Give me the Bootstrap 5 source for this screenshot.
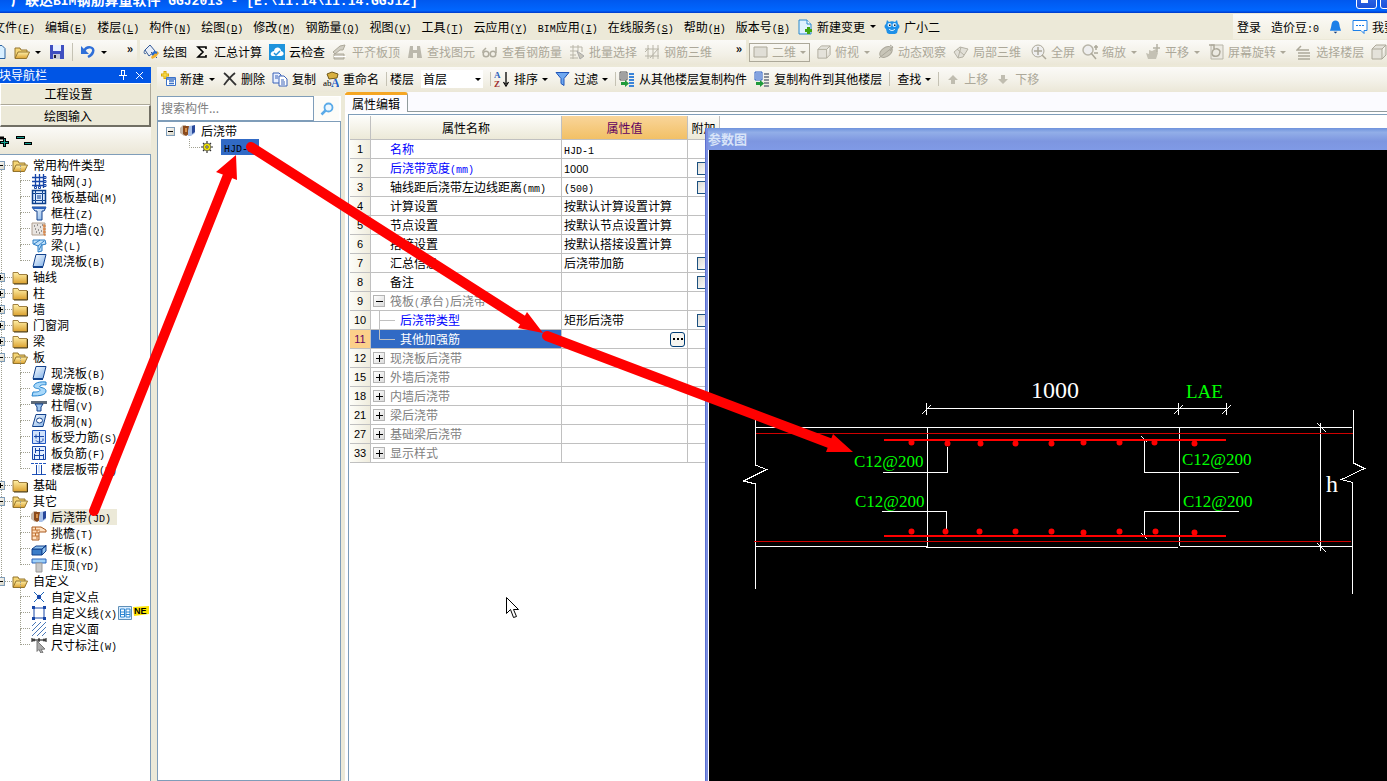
<!DOCTYPE html>
<html lang="zh-CN">
<head>
<meta charset="utf-8">
<meta name="viewport" content="width=device-width, initial-scale=1">
<title>广联达BIM钢筋算量软件 GGJ2013</title>
<link href="https://cdn.jsdelivr.net/npm/bootstrap@5.3.0/dist/css/bootstrap.min.css" rel="stylesheet">
<script src="https://cdn.jsdelivr.net/npm/bootstrap@5.3.0/dist/js/bootstrap.bundle.min.js"></script>
<style>
body{font-family:"Noto Sans CJK SC",sans-serif;font-size:12px;line-height:16px;color:#000;background:#ece9d8}
button{border:0;background:none;padding:0;color:inherit;line-height:16px;white-space:nowrap}
svg{flex:none;display:block}
.en{font-family:"Liberation Mono",monospace;font-size:10px;line-height:1}
.titlebar{height:13px;background:linear-gradient(#0058ee,#0066ff 80%,#0038c8);color:#fff;font-weight:700;font-size:14px;padding:0 0 5px 11px}
.titlebar .en{font-size:13px;white-space:pre}
.winbtns{gap:3px;margin:-12px -14px 0 auto}
.winbtn{width:21px;height:21px;border:1px solid #fff;border-radius:3px;background:linear-gradient(#3c78f0,#1a50d8)}
.menubar{height:27px;gap:10px;margin-left:-7px}
.menubar>div{gap:10px}
.menubar>.withicon{margin-left:-3px}
.account{background:linear-gradient(#fbfaf6,#f1eee0);height:25px;margin-right:-9px;padding-left:4px}
.bar{background:linear-gradient(#fbfaf7,#f3f1e8 55%,#ebe7d7);gap:7px;height:25px;padding-bottom:1px}
.bar button,.menubar .withicon{display:flex;align-items:center;gap:4px}
.bar .dim{color:#aca899}
.bar-std{width:137px}
.bar-calc{width:606px;padding-left:3px}
.bar-edit{padding-left:3px}
.caret{width:0;border:3px solid transparent;border-top-color:currentColor;border-bottom:0;margin:0 1px}
.caret.tight{margin:0}
.vsep{width:1px;height:14px;background:#c5c2b4}
.vsep.near{margin-right:-4px}
.strip{gap:3px}
.viewsel{border:1px solid #aca899;height:19px;width:62px;padding:0 3px}
.picker{appearance:none;border:0;border-radius:0;background:#fff;width:62px;height:18px;padding:0 2px;font-size:12px;line-height:16px;color:#000}
.pickwrap .caret{position:absolute;right:1px;top:8px}
.nav-pane{width:151px}
.nav-title{height:16px;background:#0055e5;color:#fff;margin-left:-1px}
.nav-tools{height:27px;background:linear-gradient(#fbfaf7,#ebe7d7)}
.navbtn{height:22px;border:1px solid #fff;border-color:#fff #aca899 #aca899 #fff;background:#ece9d8;width:100%;padding-right:14px}
.navbtn.on{border-right:2px solid #716f64;border-bottom:2px solid #716f64}
.tree{background:#fff;border-top:1px solid #7f9db9;border-right:1px solid #7f9db9;padding-top:2px}
.tree ul{list-style:none;margin:0;padding:0}
.tree li>div{display:flex;align-items:center;height:16px;white-space:nowrap}
.root{position:relative}
.root>li>div{padding-left:12px;gap:5px}
.root>li{position:relative}
.box{width:9px;height:9px;border:1px solid #7f9db9;background:linear-gradient(135deg,#fff,#d8d4c4);position:relative;flex:none}
.box::before,.box.plus::after{content:"";position:absolute;background:#000;left:1px;top:3px;width:5px;height:1px}
.box.plus::after{left:3px;top:1px;width:1px;height:5px}
.root>li>.box{position:absolute;left:-4px;top:4px;z-index:1}
.root>li::before{content:"";position:absolute;left:1px;top:8px;bottom:-8px;width:11px;border-left:1px dotted #a0a090;border-top:1px dotted #a0a090}
.root>li:last-child::before{bottom:auto}
.kids>li{position:relative}
.kids>li>div{padding-left:31px;gap:4px}
.kids>li::before{content:"";position:absolute;left:20px;top:-8px;width:10px;height:16px;border:dotted #a0a090;border-width:0 0 1px 1px}
.pick{background:#ece9d8;padding:0 6px 0 1px;margin-left:-1px}
.list-pane{width:184px;padding-top:4px}
.search{border:1px solid #7f9db9;border-radius:0;font-size:12px;height:25px;width:157px;padding:0 3px 2px;line-height:16px}
.search::placeholder{color:#808080;opacity:1}
.findbtn{width:25px;height:23px;display:flex;align-items:center;justify-content:center;background:#fdfcf8!important}
.frame{border:1px solid #7f9db9;background:#fff;padding-top:1px}
.frame>div{height:16px}
.parts{gap:5px}
.hl{background:#316ac5;padding:0 5px 0 3px}
.tabs{height:20px;background:#fbfbff}
.tabs::after{content:"";flex:1;border-bottom:1px solid #919b9c}
.tabs button{width:63px;border-top:3px solid #f5a623;border-right:1px solid #919b9c;border-radius:3px 3px 0 0;background:#fdfcff}
.grid-box{border:solid #7f9db9;border-width:1px 0 0 1px;background:#fff;margin:2px 0 0 3px}
.props{width:370px;table-layout:fixed;border-collapse:separate;border-spacing:0;margin:1px 0 0 1px}
.props th,.props td{border:solid #c0c0c0;border-width:0 1px 1px 0;height:19px;padding:0 2px;font-weight:400;line-height:16px;white-space:nowrap;overflow:hidden}
.props thead th{height:24px;text-align:center;background:linear-gradient(#fdfdfa,#ece9d8)}
.props thead .val{background:linear-gradient(#f9d59a,#f2c065);color:#600060}
.props tbody th{text-align:center;background:linear-gradient(90deg,#fdfdf8,#efecdd);font-family:"Liberation Sans",sans-serif;font-size:11px}
.props tbody th.now{background:#fcd08a;color:#600060}
.props td:nth-child(2){padding-left:19px}
.props td .num{font-family:"Liberation Sans",sans-serif;font-size:11px;line-height:1}
.props .grp{color:#808080}
.props td.grp:nth-child(2),.props td.sub:nth-child(2){padding-left:2px}
.props .wrap{display:flex;align-items:center;gap:5px;height:18px}
.fold{width:12px;height:12px;border:1px solid #b4b4b4;background:linear-gradient(135deg,#fff,#dcdcdc);position:relative}
.fold::before,.fold.plus::after{content:"";position:absolute;background:#000;left:2px;top:5px;width:7px;height:1px}
.fold.plus::after{left:5px;top:2px;width:1px;height:7px}
.blue{color:#00f}
.props .sel{background:#316ac5;color:#fff}
.props input{appearance:none;width:13px;height:13px;border:1px solid #1c5180;background:linear-gradient(135deg,#dcdcd7,#fff);display:block;margin:0 auto}
.more{width:15px;height:15px;border:1px solid #003c74!important;border-radius:3px;background:#f6f5f0!important;display:flex;align-items:center;justify-content:center;gap:2px;margin-left:auto}
.more i{width:2px;height:2px;background:#000}
.paramwin{position:absolute;left:705px;top:128px;right:0;bottom:0;background:#7b8ee0;border-left:1px solid #5a6fd0;padding-left:2px;z-index:3}
.paramhead{height:22px;background:linear-gradient(#6f93dc,#92aee8 20%,#7d96e0 60%,#809ae6);color:#d8e4f8;font-weight:700;font-size:13px;line-height:22px}
.canvas{background:#000;border-left:1px solid #fff;overflow:hidden}
.canvas text{font-family:"Liberation Serif",serif}
.marks{position:absolute;left:0;top:0;z-index:4;pointer-events:none}
</style>
</head>
<body class="vh-100 d-flex flex-column overflow-hidden position-relative">

<svg width="0" height="0" class="position-absolute" aria-hidden="true">
<defs>
<linearGradient id="gy" x2="0" y2="1"><stop stop-color="#fff0a8"/><stop offset="1" stop-color="#dca230"/></linearGradient>
<linearGradient id="gb" x2="1" y2="1"><stop stop-color="#fff"/><stop offset="1" stop-color="#7fb0e8"/></linearGradient>
<symbol id="folder" viewBox="0 0 16 16"><path d="M1 3.500h5l1 2h8v9H1z" fill="url(#gy)" stroke="#a08040"/><path d="M15.500 6v9H2" fill="none" stroke="#4a3a10"/></symbol>
<symbol id="open" viewBox="0 0 16 16"><path d="M1 14V4h5l1 2h6v3" fill="#f5d676" stroke="#94742c"/><path d="M1 14.500 4 8h11.500l-3 6.500z" fill="url(#gy)" stroke="#94742c"/></symbol>
<symbol id="axis" viewBox="0 0 16 16"><path d="M4.500 1v14M8.500 1v14M12.500 1v14M1 4.500h12M1 8.500h12M1 12.500h12" stroke="#1746a8" stroke-width="1.300"/><path d="M13 3.500h2v2h-2zM13 7.500h2v2h-2zM13 11.500h2v2h-2zM3.500 13.500h2v2h-2zM7.500 13.500h2v2h-2z" fill="#fff" stroke="#1746a8"/></symbol>
<symbol id="raft" viewBox="0 0 16 16"><path d="M1.500 1.500h13v13h-13z" fill="#dcebff" stroke="#0e418d" stroke-width="1.500"/><path d="M4.500 4.500h7v7h-7zM7 6v4M9 6v4M1 4.500h3M12 4.500h3M1 11.500h3M12 11.500h3M4.500 1v3M11.500 1v3M4.500 12v3M11.500 12v3" fill="none" stroke="#0e418d"/></symbol>
<symbol id="col" viewBox="0 0 16 16"><path d="M1 2h14l-2 4h-2v9H6V6H4z" fill="url(#gb)" stroke="#12418c"/><path d="M1 2h14v2H2z" fill="#2b62bb"/></symbol>
<symbol id="wall" viewBox="0 0 16 16"><path d="M1 2h13v12H1z" fill="#e8e4e0" stroke="#b0a090"/><path d="M3 5h1M6 4h1M9 6h1M4 8h1M7 9h1M5 11h1M10 10h1M8 12h1M11 4h1" stroke="#444"/><path d="M13 3v11M12 5h3M12 8h3M12 11h3M13 14h2" stroke="#d87830"/></symbol>
<symbol id="beam" viewBox="0 0 16 16"><path d="M2 3h12l1 4-4 1v6l-4 1V9L2 7z" fill="#bfe0fa" stroke="#2b7cc4"/><path d="m3 7 6-4M7 9l6-5M8 13l3-6" stroke="#2b7cc4"/></symbol>
<symbol id="slab" viewBox="0 0 16 16"><path d="M5 1.500h10l-3 12H2z" fill="url(#gb)" stroke="#12418c"/><path d="M2 14h10" stroke="#12418c" stroke-width="2"/></symbol>
<symbol id="spiral" viewBox="0 0 16 16"><path d="M15 1C5 0 2 4 3 6s6 1 6 3-4 2-7 2l-1 4c8 0 14-1 14-5S7 7 9 5s6-1 6-1z" fill="#a8d8fa" stroke="#2584cf"/></symbol>
<symbol id="cap" viewBox="0 0 16 16"><path d="M0 4h16v3H0z" fill="#5d6a78"/><path d="M4 7h8l-2 3v4H6v-4z" fill="#9ec6ee" stroke="#12418c"/></symbol>
<symbol id="hole" viewBox="0 0 16 16"><path d="M5 1.500h10l-3 12H1.500z" fill="url(#gb)" stroke="#12418c"/><ellipse cx="8.500" cy="7.500" rx="3" ry="2.500" fill="#fff" stroke="#12418c"/></symbol>
<symbol id="rebar" viewBox="0 0 16 16"><path d="M1.500 1.500h13v13h-13z" fill="#cfe1fb" stroke="#1f55c0"/><path d="M8.500 3v11M3 7.500h10M5 5.500v4M5 11.500c1 2 6 2 7 0v-2" fill="none" stroke="#1746a8"/></symbol>
<symbol id="neg" viewBox="0 0 16 16"><path d="M1.500 1.500h13v13h-13z" fill="#e4efff" stroke="#1746a8"/><path d="M4 5.500h9M3 10.500h10M8.500 3v11M4.500 3v5M3.500 9v5M12.500 9v5" stroke="#1746a8"/></symbol>
<symbol id="band" viewBox="0 0 16 16"><path d="M0 2.500h16" stroke="#1f55c0" stroke-dasharray="3 1"/><path d="M1 13.500h14" stroke="#1f55c0"/><path d="M5.500 4v10M10.500 4v10" stroke="#1746a8"/><path d="M7 4h2v8H7z" fill="#cfe1fb"/></symbol>
<symbol id="pour" viewBox="0 0 16 16"><path d="M0 5l3-3h3v10l-2 1-4-3z" fill="#c8b8a8"/><path d="M3 3h6v8l-3 2-3-2z" fill="#8a4a1c"/><path d="M5 5h2v4H5z" fill="#d89048"/><path d="M9 3l6-1v8l-4 3H8V8z" fill="#a8c0e8"/><path d="M12 3l3-1v7l-3 2z" fill="#28479a"/></symbol>
<symbol id="eave" viewBox="0 0 16 16"><path d="M1 2h9l5 3v2H8v8H1z" fill="#ffe0c0" stroke="#a85a20"/><path d="M1 5h8M1 8h7M1 11h7M4.500 2v3M4.500 8v3M6 5v3M6 11v3" stroke="#c07030"/></symbol>
<symbol id="rail" viewBox="0 0 16 16"><path d="M1 8h10v6H1z" fill="#3a7cc8" stroke="#12418c"/><path d="m1 8 4-3h10l-4 3zM11 8l4-4v6l-4 4z" fill="#8fc2f0" stroke="#12418c"/></symbol>
<symbol id="coping" viewBox="0 0 16 16"><path d="M1 2h14v4H1z" fill="#9ed0f8" stroke="#2b62bb"/><path d="M5 6h6v9H5z" fill="#c8c8c8" stroke="#999"/></symbol>
<symbol id="pt" viewBox="0 0 16 16"><path d="M3 3l10 10M13 3 3 13" fill="none" stroke="#1a62b8"/><circle cx="8" cy="8" r="2.200" fill="#1746a8"/></symbol>
<symbol id="ln" viewBox="0 0 16 16"><path d="M3 3h10v10H3z" fill="#fff" stroke="#1746a8"/><path d="M1 1h3v3H1zM12 1h3v3h-3zM1 12h3v3H1zM12 12h3v3h-3z" fill="#1746a8"/></symbol>
<symbol id="hatch" viewBox="0 0 16 16"><path d="m1 5 4-4M1 10l9-9M1 15 15 1M6 15l9-9M11 15l4-4" stroke="#4a78b8"/></symbol>
<symbol id="dimn" viewBox="0 0 16 16"><path d="M1 1v4M15 1v4M8 1v4M1 3h14M3 1.500v3M13 1.500v3" stroke="#000"/><path d="m6 4 8 8-4 .4 2 3-2 1-2-4-2 2z" fill="#aaa" stroke="#777"/></symbol>
<symbol id="gear" viewBox="0 0 12 12"><path d="M6 0v12M0 6h12M2 2l8 8M10 2l-8 8" stroke="#333" stroke-width="1.200"/><circle cx="6" cy="6" r="3.800" fill="#f4e600" stroke="#555" stroke-width=".8"/><circle cx="6" cy="6" r="1.200" fill="#fff" stroke="#222" stroke-width=".8"/></symbol>
<symbol id="page" viewBox="0 0 16 16"><path d="M2 1h8l4 4v10H2z" fill="#e0f2ff" stroke="#2888cc"/><path d="M10 1v4h4" fill="#fff" stroke="#2888cc"/></symbol>
<symbol id="bldg" viewBox="0 0 16 16"><path d="M1 1h7v8H1z" fill="#eee" stroke="#555"/><path d="M2 3h5M2 5h5M2 7h5" stroke="#555"/><path d="M10 3h5M10 6h5M10 9h5M10 12h5M10 15h5" stroke="#3b84d8" stroke-width="1.800"/><path d="M2 11h4V9l4 3.500L6 16v-2H2z" fill="#1f9a3a"/></symbol>
<symbol id="bldg2" viewBox="0 0 16 16"><path d="M1 1h7v8H1z" fill="#dbe8ff" stroke="#2b5cc0"/><path d="M2 3h5M2 5h5M2 7h5" stroke="#2b5cc0"/><path d="M10 3h5M10 6h5M10 9h5M10 12h5M10 15h5" stroke="#8a8f98" stroke-width="1.800"/><path d="M2 11h4V9l4 3.500L6 16v-2H2z" fill="#1f9a3a"/></symbol>
<symbol id="cube" viewBox="0 0 16 16"><path d="M1 5h10v10H1zM1 5l4-4h10l-4 4M15 1v10l-4 4" fill="#e4e2da" stroke="#aca899"/></symbol>
</defs>
</svg>

<header class="titlebar d-flex align-items-end overflow-hidden text-nowrap">
  <div>广联达<span class="en">BIM</span>钢筋算量软件<span class="en"> GGJ2013 - [E:\11.14\11.14.GGJ12]</span></div>
  <div class="winbtns d-flex align-self-start">
    <button class="winbtn d-flex align-items-end justify-content-center" aria-label="最小化"><svg width="20" height="8"><path d="M4 0h7v3H4z" fill="#fff"/></svg></button>
    <button class="winbtn" aria-label="最大化"></button>
  </div>
</header>

<nav class="menubar d-flex align-items-center text-nowrap">
  <div class="d-flex">
  <button>文件<span class="en">(<u>F</u>)</span></button><button>编辑<span class="en">(<u>E</u>)</span></button><button>楼层<span class="en">(<u>L</u>)</span></button><button>构件<span class="en">(<u>N</u>)</span></button><button>绘图<span class="en">(<u>D</u>)</span></button><button>修改<span class="en">(<u>M</u>)</span></button><button>钢筋量<span class="en">(<u>Q</u>)</span></button><button>视图<span class="en">(<u>V</u>)</span></button><button>工具<span class="en">(<u>T</u>)</span></button><button>云应用<span class="en">(<u>Y</u>)</span></button><button><span class="en">BIM</span>应用<span class="en">(<u>I</u>)</span></button><button>在线服务<span class="en">(<u>S</u>)</span></button><button>帮助<span class="en">(<u>H</u>)</span></button><button>版本号<span class="en">(<u>B</u>)</span></button>
  </div>
  <button class="withicon"><svg width="16" height="16"><use href="#page"/><path d="M8 11.500h7M11.500 8v7" stroke="#3fa510" stroke-width="3"/></svg>新建变更<i class="caret"></i></button>
  <button class="withicon"><svg width="16" height="16" viewBox="0 0 16 16"><path d="M3 1l2 2c2-1 4-1 6 0l2-2 1 4c2 1 2 4 0 5l-1 4-2 1H5l-2-1-1-4C0 9 0 6 2 5z" fill="#1e90e8"/><circle cx="5.500" cy="6" r="2" fill="#dff2ff"/><circle cx="10.500" cy="6" r="2" fill="#dff2ff"/><path d="M5 5.500h1.500v1.500H5zM10 5.500h1.500v1.500H10z" fill="#123"/><path d="M5 10c2 2 4 2 6 0" stroke="#fff" fill="none"/></svg>广小二</button>
  <div class="account d-flex align-items-center ms-auto"><button>登录</button><button>造价豆<span class="en">:0</span></button>
    <svg width="13" height="16" viewBox="0 0 14 16"><path d="M7 1c5 0 4 6 5 8l1 3H1l1-3C3 7 2 1 7 1z" fill="#1c7fe8"/><path d="M5 13h4l-2 2z" fill="#123c80"/></svg>
    <button class="withicon"><svg width="16" height="16" viewBox="0 0 16 16"><path d="M1 1.500h14v10h-3v3l-3-3H1z" fill="#fff" stroke="#1c7fe8"/><path d="M4 6.500h8" stroke="#1c7fe8" stroke-dasharray="2 1"/></svg>我要</button></div>
</nav>

<div class="strip d-flex text-nowrap">
  <div class="bar bar-std d-flex align-items-center flex-shrink-0">
    <button aria-label="新建"><svg width="7" height="16"><path d="M-6 1.500h8l3 3v10h-11" fill="#d8efff" stroke="#2b62a0"/></svg></button>
    <button aria-label="打开"><svg width="16" height="16"><use href="#open"/></svg><i class="caret"></i></button>
    <button aria-label="保存"><svg width="16" height="16"><path d="M1 1h14v14H1z" fill="#3f4fc0"/><path d="M4 1h8v6H4z" fill="#e8f0ff"/><path d="M4 10h7v5H4z" fill="#c8ccd8"/><path d="M5 11h2v3H5z" fill="#223"/></svg></button>
    <span class="vsep h-75"></span>
    <button aria-label="撤销"><svg width="16" height="16"><path d="M4 7c3-6 11-4 9 1-1 3-3 4-5 5" fill="none" stroke="#2f6fd8" stroke-width="2.500"/><path d="M1 2v8h8z" fill="#2f6fd8"/></svg><i class="caret"></i></button>
    <b class="ms-auto me-1 align-self-start">»</b>
  </div>
  <div class="bar bar-calc d-flex align-items-center flex-shrink-0">
    <button><svg width="16" height="16"><path d="m2 6 5-5 5 6-6 5z" fill="#e8eef8" stroke="#345a98"/><path d="M2 6c-2 3 0 5 1 3M8 8l6 6" stroke="#345a98" fill="none"/><path d="m8 13 3-3 3-3 2 2-3 4-4 2z" fill="#f0b030"/><path d="m9 11 3-3 2 1" fill="none" stroke="#246ad0" stroke-width="2"/></svg>绘图</button>
    <button><svg width="16" height="16"><path d="M12 5V3H4l5 5-5 5h8v-2" fill="none" stroke="#000" stroke-width="1.600"/></svg>汇总计算</button>
    <button><svg width="16" height="16"><path d="M0 0h16v16H0z" fill="#1e93dc"/><path d="M3 12c-3-2 0-5 2-5 1-5 7-4 7 0 4 1 3 5 0 5z" fill="#fff"/><path d="m5 9 2 2 4-4" stroke="#1e93dc" stroke-width="1.500" fill="none"/></svg>云检查</button>
    <button class="dim"><svg width="16" height="16"><path d="m1 8 7-6 5-1-2 5H8l-5 4zM2 10h10v5H2z" fill="#d0cdc2" stroke="#aca899"/><path d="M2 12.500h12" stroke="#fff"/></svg>平齐板顶</button>
    <button class="dim"><svg width="16" height="16"><path d="M3 2h3v4h4V2h3l2 12h-5V9H6v5H1z" fill="#bbb8ac"/></svg>查找图元</button>
    <button class="dim"><svg width="16" height="16"><g fill="none" stroke="#b0ad9f" stroke-width="1.500"><circle cx="4" cy="10" r="2.800"/><circle cx="11" cy="10" r="2.800"/><path d="M1 9V7l3-3M14 9V3"/></g></svg>查看钢筋量</button>
    <button class="dim"><svg width="16" height="16"><path d="M1 3h12M1 7h8M1 11h6M1 14h8M4 1v14M9 1v6M13 3v5" stroke="#b8b5a8"/><path d="m8 7 7 5-4 3z" fill="#c8c5b8" stroke="#aaa"/></svg>批量选择</button>
    <button class="dim"><svg width="16" height="16"><path d="M1 5h14M1 12h14M4 1v14M9 1v14M14 1v14M1 8l4-4M6 14l8-9" stroke="#b8b5a8" fill="none"/></svg>钢筋三维</button>
    <b class="ms-auto me-1 align-self-start">»</b>
  </div>
  <div class="bar d-flex align-items-center flex-grow-1 overflow-hidden">
    <button class="viewsel dim"><svg width="15" height="12"><path d="M1 1h13v10H1z" fill="#e0ded6" stroke="#aca899"/></svg>二维<i class="caret ms-auto me-0"></i></button>
    <button class="dim"><svg width="14" height="16" viewBox="0 0 16 16"><use href="#cube"/></svg>俯视<i class="caret"></i></button>
    <button class="dim"><svg width="16" height="16"><ellipse cx="8" cy="8" rx="7" ry="4.500" transform="rotate(-35 8 8)" fill="#c8c5b8" stroke="#aaa79a"/><path d="M1 14 15 3M12 1l3 2-3 4" stroke="#aaa79a" fill="none"/></svg>动态观察</button>
    <button class="dim"><svg width="16" height="16"><path d="m1 8 6-5 8 2-5 8-5 1zM4 5l7 6M8 3 5 14" fill="#e2e0d8" stroke="#b4b1a4"/></svg>局部三维</button>
    <span class="vsep near"></span>
    <button class="dim"><svg width="16" height="16"><circle cx="7" cy="7" r="6" fill="#eee" stroke="#aca899"/><path d="M3 7h8M7 3v8M11 11l4 4" stroke="#aca899" stroke-width="1.500"/></svg>全屏</button>
    <button class="dim"><svg width="16" height="16"><circle cx="6" cy="6" r="5" fill="#eee" stroke="#b8b5a8" stroke-width="1.500"/><path d="m9 9 5 6M14 1v5M12 3h4M12 9h4" stroke="#aca899" stroke-width="1.500"/></svg>缩放<i class="caret"></i></button>
    <button class="dim"><svg width="16" height="16"><path d="M3 15 1 9l3 1V6l3 1 4-2 2 4-2 6z" fill="#c4c1b4"/><path d="M12 0v8M8 4h7" stroke="#b4b1a4" stroke-width="1.500"/></svg>平移<i class="caret"></i></button>
    <button class="dim"><svg width="16" height="16"><path d="M3 1h12v14H3z" fill="#eceae2" stroke="#b8b5a8"/><path d="M4 10c0-7 8-6 8-2M12 7c0 7-7 6-8 3M1 1h5v5" fill="none" stroke="#aca899" stroke-width="1.500"/></svg>屏幕旋转<i class="caret tight"></i></button>
    <span class="vsep near"></span>
    <button class="dim"><svg width="16" height="16"><path d="M5 2 1 6h12M2 9h12M2 12h12M2 15h12" fill="none" stroke="#aca899" stroke-width="1.500"/></svg>选择楼层</button>
    <button class="dim" aria-label="三维"><svg width="16" height="16"><use href="#cube"/></svg></button>
  </div>
</div>

<div class="d-flex flex-grow-1 overflow-hidden" style="gap:6px;padding-top:2px">
  <aside class="nav-pane d-flex flex-column flex-shrink-0">
    <div class="nav-title d-flex align-items-center text-nowrap">块导航栏
      <svg width="32" height="12" class="ms-auto me-1"><path d="M7 1.500h4M7.500 1v5M10.500 1v5M5 6.500h8M9.500 7v4M22 3l7 7M29 3l-7 7" transform="translate(-1 0)" stroke="#fff"/></svg></div>
    <button class="navbtn">工程设置</button>
    <button class="navbtn on">绘图输入</button>
    <div class="nav-tools d-flex align-items-center"><svg width="34" height="14" role="img" aria-label="展开 折叠"><path d="M0 4h4M0 8.500h9M4.500 4v9M16 3.500h9M24 9.500h8" stroke="#000" stroke-width="3"/><path d="M1 8.500h7M4.500 5v7M17 3.500h7M25 9.500h6" stroke="#15a090"/></svg></div>
    <div class="tree flex-grow-1">
      <ul class="root">
        <li><span class="box"></span><div><svg width="16" height="16"><use href="#open"/></svg>常用构件类型</div>
          <ul class="kids">
            <li><div><svg width="16" height="16"><use href="#axis"/></svg><span>轴网<span class="en">(J)</span></span></div></li>
            <li><div><svg width="16" height="16"><use href="#raft"/></svg><span>筏板基础<span class="en">(M)</span></span></div></li>
            <li><div><svg width="16" height="16"><use href="#col"/></svg><span>框柱<span class="en">(Z)</span></span></div></li>
            <li><div><svg width="16" height="16"><use href="#wall"/></svg><span>剪力墙<span class="en">(Q)</span></span></div></li>
            <li><div><svg width="16" height="16"><use href="#beam"/></svg><span>梁<span class="en">(L)</span></span></div></li>
            <li><div><svg width="16" height="16"><use href="#slab"/></svg><span>现浇板<span class="en">(B)</span></span></div></li>
          </ul></li>
        <li><span class="box plus"></span><div><svg width="16" height="16"><use href="#folder"/></svg>轴线</div></li>
        <li><span class="box plus"></span><div><svg width="16" height="16"><use href="#folder"/></svg>柱</div></li>
        <li><span class="box plus"></span><div><svg width="16" height="16"><use href="#folder"/></svg>墙</div></li>
        <li><span class="box plus"></span><div><svg width="16" height="16"><use href="#folder"/></svg>门窗洞</div></li>
        <li><span class="box plus"></span><div><svg width="16" height="16"><use href="#folder"/></svg>梁</div></li>
        <li><span class="box"></span><div><svg width="16" height="16"><use href="#open"/></svg>板</div>
          <ul class="kids">
            <li><div><svg width="16" height="16"><use href="#slab"/></svg><span>现浇板<span class="en">(B)</span></span></div></li>
            <li><div><svg width="16" height="16"><use href="#spiral"/></svg><span>螺旋板<span class="en">(B)</span></span></div></li>
            <li><div><svg width="16" height="16"><use href="#cap"/></svg><span>柱帽<span class="en">(V)</span></span></div></li>
            <li><div><svg width="16" height="16"><use href="#hole"/></svg><span>板洞<span class="en">(N)</span></span></div></li>
            <li><div><svg width="16" height="16"><use href="#rebar"/></svg><span>板受力筋<span class="en">(S)</span></span></div></li>
            <li><div><svg width="16" height="16"><use href="#neg"/></svg><span>板负筋<span class="en">(F)</span></span></div></li>
            <li><div><svg width="16" height="16"><use href="#band"/></svg><span>楼层板带<span class="en">(H)</span></span></div></li>
          </ul></li>
        <li><span class="box plus"></span><div><svg width="16" height="16"><use href="#folder"/></svg>基础</div></li>
        <li><span class="box"></span><div><svg width="16" height="16"><use href="#open"/></svg>其它</div>
          <ul class="kids">
            <li><div><svg width="16" height="16"><use href="#pour"/></svg><span class="pick">后浇带<span class="en">(JD)</span></span></div></li>
            <li><div><svg width="16" height="16"><use href="#eave"/></svg><span>挑檐<span class="en">(T)</span></span></div></li>
            <li><div><svg width="16" height="16"><use href="#rail"/></svg><span>栏板<span class="en">(K)</span></span></div></li>
            <li><div><svg width="16" height="16"><use href="#coping"/></svg><span>压顶<span class="en">(YD)</span></span></div></li>
          </ul></li>
        <li><span class="box"></span><div><svg width="16" height="16"><use href="#open"/></svg>自定义</div>
          <ul class="kids">
            <li><div><svg width="16" height="16"><use href="#pt"/></svg><span>自定义点</span></div></li>
            <li><div class="gap-1"><svg width="16" height="16"><use href="#ln"/></svg><span>自定义线<span class="en">(X)</span></span><svg width="32" height="16" style="margin-left:-4px"><path d="M1.500 1.500h13v13h-13z" fill="#d8ecff" stroke="#6090b8"/><path d="M3.500 4h4v8h-4zM9 4h4v8H9zM4 7h3M4 9.500h3M9 7h4M9 9.500h4" fill="#fff" stroke="#2b84d0"/><path d="m16 2 16-1v8l-15 2z" fill="#ffe400"/><text x="17" y="9" font-family="Liberation Sans" font-size="9" font-weight="700">NE</text></svg></div></li>
            <li><div><svg width="16" height="16"><use href="#hatch"/></svg><span>自定义面</span></div></li>
            <li><div><svg width="16" height="16"><use href="#dimn"/></svg><span>尺寸标注<span class="en">(W)</span></span></div></li>
          </ul></li>
      </ul>
    </div>
  </aside>

  <main class="flex-grow-1 d-flex flex-column overflow-hidden">
    <div class="bar bar-edit d-flex align-items-center text-nowrap flex-shrink-0">
      <button><svg width="16" height="16"><path d="M5 0v8M1 4h8" stroke="#d8a800" stroke-width="3"/><path d="M5 1v6M2 4h6" stroke="#ffe860"/><path d="M6.500 6.500h9v8h-9z" fill="#fff" stroke="#3b72c8"/><path d="M7 8h8M9 10h5M9 12.500h5" stroke="#3b72c8" stroke-width="1.500"/></svg>新建<i class="caret"></i></button>
      <button><svg width="14" height="16"><path d="M1 2c4 3 8 8 12 12M12 2C8 5 4 10 1 14" stroke="#333" stroke-width="1.800" fill="none"/></svg>删除</button>
      <button><svg width="16" height="16"><path d="M1 2h6l2 2v8H1z" fill="#e8f0ff" stroke="#3b62b8"/><path d="M7 5h5l3 3v7H7z" fill="#fff" stroke="#3b62b8"/><path d="M3 5h3M3 7h3M9 9h3M9 11h4M9 13h4" stroke="#3b62b8"/></svg>复制</button>
      <button><svg width="16" height="16"><path d="m4 3 5-2 6 2-1 4-8 1z" fill="#d8b040" stroke="#705818"/><text x="0" y="15" font-family="Liberation Serif" font-size="9">ab</text><text x="8" y="16" font-family="Liberation Serif" font-size="12" font-weight="700" fill="#2060c8">A</text></svg>重命名</button>
      <span class="vsep near"></span>
      <label for="floor">楼层</label>
      <div class="position-relative pickwrap"><select id="floor" class="picker"><option>首层</option></select><i class="caret"></i></div>
      <span class="vsep near"></span>
      <button><svg width="16" height="16"><text x="0" y="7" font-family="Liberation Serif" font-size="9" font-weight="700" fill="#2b62bb">A</text><text x="0" y="16" font-family="Liberation Serif" font-size="9" font-weight="700" fill="#a03030">Z</text><path d="M12 1v12M9.500 11l2.500 4 2.500-4" stroke="#000" fill="none" stroke-width="1.300"/></svg>排序<i class="caret tight"></i></button>
      <button><svg width="15" height="16"><path d="M1 1.500h13l-5 6v7l-3-2v-5z" fill="#6fa8f0" stroke="#1f54b8"/></svg>过滤<i class="caret tight"></i></button>
      <span class="vsep near"></span>
      <button><svg width="16" height="16"><use href="#bldg"/></svg>从其他楼层复制构件</button>
      <button><svg width="16" height="16"><use href="#bldg2"/></svg>复制构件到其他楼层</button>
      <span class="vsep"></span>
      <button>查找<i class="caret tight"></i></button>
      <span class="vsep"></span>
      <button class="dim"><svg width="14" height="16"><path d="m7 4 5 5H9v4H5V9H2z" fill="#c0bdb0"/></svg>上移</button>
      <button class="dim"><svg width="16" height="16"><path d="m8 13 5-5h-3V4H6v4H3z" fill="#c0bdb0"/></svg>下移</button>
    </div>
    <div class="d-flex flex-grow-1 overflow-hidden" style="gap:4px">
      <section class="list-pane d-flex flex-column flex-shrink-0">
        <div class="d-flex align-items-center bg-white"><input class="search" type="text" placeholder="搜索构件..." aria-label="搜索构件"><button class="findbtn" aria-label="查找"><svg width="14" height="14"><circle cx="8.500" cy="5.500" r="4" fill="#eaf6ff" stroke="#5aaae8" stroke-width="1.800"/><path d="m5.500 8.500-4 4" stroke="#5aaae8" stroke-width="2.500"/></svg></button></div>
        <div class="frame flex-grow-1">
          <div class="parts d-flex align-items-center ps-2"><span class="box"></span><svg width="16" height="16"><use href="#pour"/></svg>后浇带</div>
          <div class="d-flex align-items-center" style="padding-left:31px"><svg width="12" height="16"><path d="M.5 0v8.500H12" fill="none" stroke="#a0a090" stroke-dasharray="1 1"/></svg><svg width="12" height="12" class="me-2"><use href="#gear"/></svg><span class="hl"><span class="en">HJD-1</span></span></div>
        </div>
      </section>
      <section class="flex-grow-1 d-flex flex-column overflow-hidden bg-white">
        <div class="tabs d-flex flex-shrink-0"><button>属性编辑</button></div>
        <div class="grid-box flex-grow-1">
          <table class="props">
            <colgroup><col style="width:21px"><col style="width:191px"><col style="width:126px"><col style="width:32px"></colgroup>
            <thead><tr><th></th><th>属性名称</th><th class="val">属性值</th><th>附加</th></tr></thead>
            <tbody>
            <tr><th>1</th><td class="blue">名称</td><td><span class="en">HJD-1</span></td><td></td></tr>
            <tr><th>2</th><td class="blue">后浇带宽度<span class="en">(mm)</span></td><td><span class="num">1000</span></td><td><input type="checkbox" aria-label="后浇带宽度附加"></td></tr>
            <tr><th>3</th><td>轴线距后浇带左边线距离<span class="en">(mm)</span></td><td><span class="en">(500)</span></td><td><input type="checkbox" aria-label="轴线距离附加"></td></tr>
            <tr><th>4</th><td>计算设置</td><td>按默认计算设置计算</td><td></td></tr>
            <tr><th>5</th><td>节点设置</td><td>按默认节点设置计算</td><td></td></tr>
            <tr><th>6</th><td>搭接设置</td><td>按默认搭接设置计算</td><td></td></tr>
            <tr><th>7</th><td>汇总信息</td><td>后浇带加筋</td><td><input type="checkbox" aria-label="汇总信息附加"></td></tr>
            <tr><th>8</th><td>备注</td><td></td><td><input type="checkbox" aria-label="备注附加"></td></tr>
            <tr><th>9</th><td class="grp"><div class="wrap"><span class="fold"></span><span>筏板<span class="en">(</span>承台<span class="en">)</span>后浇带</span></div></td><td></td><td></td></tr>
            <tr><th>10</th><td class="sub blue"><div class="wrap"><svg width="22" height="18"><path d="M6.500 0v18M6.500 9.500H22" stroke="#c0c0c0" fill="none"/></svg>后浇带类型</div></td><td>矩形后浇带</td><td><input type="checkbox" aria-label="后浇带类型附加"></td></tr>
            <tr><th class="now">11</th><td class="sub sel"><div class="wrap"><svg width="22" height="18"><path d="M6.500 0v9.500H22" stroke="#c0c0c0" fill="none"/></svg>其他加强筋</div></td><td><button class="more" aria-label="编辑"><i></i><i></i><i></i></button></td><td></td></tr>
            <tr><th>12</th><td class="grp"><div class="wrap"><span class="fold plus"></span>现浇板后浇带</div></td><td></td><td></td></tr>
            <tr><th>15</th><td class="grp"><div class="wrap"><span class="fold plus"></span>外墙后浇带</div></td><td></td><td></td></tr>
            <tr><th>18</th><td class="grp"><div class="wrap"><span class="fold plus"></span>内墙后浇带</div></td><td></td><td></td></tr>
            <tr><th>21</th><td class="grp"><div class="wrap"><span class="fold plus"></span>梁后浇带</div></td><td></td><td></td></tr>
            <tr><th>27</th><td class="grp"><div class="wrap"><span class="fold plus"></span>基础梁后浇带</div></td><td></td><td></td></tr>
            <tr><th>33</th><td class="grp"><div class="wrap"><span class="fold plus"></span>显示样式</div></td><td></td><td></td></tr>
            </tbody>
          </table>
        </div>
      </section>
    </div>
  </main>
</div>

<section class="paramwin d-flex flex-column">
  <div class="paramhead">参数图</div>
  <div class="canvas flex-grow-1">
    <svg width="678" height="631" viewBox="709 150 678 631">
      <g fill="none" stroke="#fff" shape-rendering="crispEdges">
        <path d="M755.500 420v45l11 4.500-23 11.500 12 3V589M1353.500 410v53l11 5.500-23 11 11 3V594"/>
        <path d="M926 408.500h300M926.500 403v12M1178.500 403v12M1226.500 403v12M922 414l9-9M1174 414l9-9M1222 414l9-9"/>
        <path d="M755 427.500h597M755 546.500h172M926 547.500h252M1180 546.500h172M927.500 427v121M1179.500 427v119"/>
        <path d="M883 472.500h64.500V447M882 511.500h64.500V530M1239 472.500h-94.500V440M1239 511.500h-94.500V536M1141 436l6 6M1141 533l6 6"/>
        <path d="M1320.500 423v128M1317 423l9 9M1317 543l9 9"/>
      </g>
      <path d="M756 433.500h597M754 541.500h597" stroke="#d00000" shape-rendering="crispEdges"/>
      <path d="M884 440h342M884 536h342" stroke="#f00" stroke-width="2" shape-rendering="crispEdges"/>
      <path d="M911.500 442.500h0M947.500 443.500h0M980.500 443.500h0M1015.500 443.500h0M1051.500 443.500h0M1083.500 442.500h0M1119.500 442.500h0M1154.500 442.500h0M1194.500 443.500h0M911.500 531.500h0M945.500 531.500h0M979.500 531.500h0M1015.500 531.500h0M1051.500 531.500h0M1083.500 532.500h0M1119.500 531.500h0M1155.500 531.500h0M1194.500 532.500h0" stroke="#f00" stroke-width="6" stroke-linecap="round"/>
      <g fill="#fff" font-size="24"><text x="1031" y="398">1000</text><text x="1326" y="492">h</text></g>
      <text x="1186" y="398" fill="#0f0" font-size="19">LAE</text>
      <g fill="#0f0" font-size="17"><text x="854" y="467">C12@200</text><text x="855" y="507">C12@200</text><text x="1182" y="465">C12@200</text><text x="1183" y="507">C12@200</text></g>
    </svg>
  </div>
</section>

<svg class="marks" width="900" height="640" aria-hidden="true">
  <g stroke="#f00" stroke-width="10" stroke-linecap="round"><path d="M94 511 228 175M251 147l276 176M547 336l285 108"/></g>
  <g fill="#f00"><path d="m236 155 1 25-21-8zM543 333l-25-5 9-16zM853 452l-27 0 7-18z"/></g>
  <path d="M506.500 597.500v16l4-4 3 8 3-1-3-7h5z" fill="#fff" stroke="#000"/>
</svg>
</body>
</html>
